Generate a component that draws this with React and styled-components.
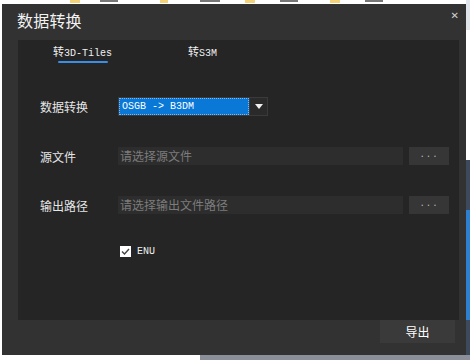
import styled, { createGlobalStyle } from 'styled-components';

const GlobalStyle = createGlobalStyle`
  html, body {
    margin: 0;
    padding: 0;
    background: #ffffff;
  }
  * {
    box-sizing: border-box;
  }
`;

const CJK = `"Noto Sans CJK SC", "Noto Sans", sans-serif`;
const MONO = `"Liberation Mono", "Noto Sans CJK SC", monospace`;

const Desktop = styled.div`
  position: relative;
  width: 470px;
  height: 360px;
  overflow: hidden;
  background: #ffffff;
`;

const Blob = styled.div`
  position: absolute;
  width: ${(p) => p.w}px;
  height: ${(p) => p.h}px;
  background: ${(p) => p.c};
`;

const Dialog = styled.div`
  position: absolute;
  left: 2px;
  top: 4px;
  width: 464px;
  height: 351px;
  background: #323232;
  display: flex;
  flex-direction: column;
  font-family: ${CJK};
`;

const Header = styled.div`
  height: 36px;
  display: flex;
  align-items: center;
  justify-content: space-between;
  padding: 0 7px 4px 15px;
`;

const Title = styled.div`
  font-size: 16px;
  color: #f2f2f2;
  letter-spacing: 0.2px;
`;

const Close = styled.div`
  font-family: "DejaVu Sans", sans-serif;
  font-size: 10px;
  color: #d0d0d0;
  align-self: flex-start;
  margin-top: 6px;
`;

const Panel = styled.div`
  height: 280px;
  margin: 0 7px 0 16px;
  background: #252525;
  display: flex;
  flex-direction: column;
`;

const Tabs = styled.div`
  display: flex;
  height: 24px;
  padding-left: 35px;
  padding-top: 4px;
`;

const Tab = styled.div`
  position: relative;
  width: ${(p) => p.w}px;
  font-family: ${MONO};
  font-size: 10px;
  line-height: 14px;
  color: #f0f0f0;
  white-space: nowrap;
  &::after {
    content: '';
    display: ${(p) => (p.active ? 'block' : 'none')};
    position: absolute;
    left: 5px;
    top: 17px;
    width: 50px;
    height: 2px;
    border-radius: 1px;
    background: #3a8ee6;
  }
`;

const Han = styled.span`
  font-family: ${CJK};
  font-size: 11px;
`;

const Form = styled.div`
  display: grid;
  grid-template-columns: 78px 1fr;
  row-gap: 31px;
  align-items: center;
  padding: 33px 10px 0 22px;
`;

const Label = styled.div`
  font-size: 12px;
  color: #e6e6e6;
`;

const SelectBox = styled.div`
  display: flex;
  width: 150px;
  height: 19px;
  padding: 1px;
  background: #3a3a3a;
`;

const SelectValue = styled.div`
  flex: 1;
  background: #0a78d7;
  color: #ffffff;
  font-family: ${MONO};
  font-size: 10px;
  line-height: 17px;
  padding-left: 3px;
  outline: 1px dotted #7fb8f0;
  outline-offset: -1px;
`;

const SelectArrow = styled.div`
  width: 17px;
  display: flex;
  align-items: center;
  justify-content: center;
  background: #2a2a2a;
  margin-left: 1px;
  &::before {
    content: '';
    border-left: 4px solid transparent;
    border-right: 4px solid transparent;
    border-top: 5px solid #f0f0f0;
  }
`;

const FileRow = styled.div`
  display: flex;
  gap: 6px;
  height: 18px;
`;

const Input = styled.div`
  flex: 1;
  background: #2d2d2d;
  color: #7c7c7c;
  font-size: 12px;
  line-height: 18px;
  padding-left: 2px;
`;

const Browse = styled.div`
  width: 40px;
  background: #363636;
  color: #bdbdbd;
  font-family: ${MONO};
  font-size: 9px;
  line-height: 16px;
  text-align: center;
  letter-spacing: 1px;
`;

const CheckRow = styled.div`
  display: flex;
  align-items: center;
  gap: 6px;
  padding: 32px 0 0 102px;
`;

const Check = styled.div`
  width: 11px;
  height: 11px;
  background: #ffffff;
  display: flex;
  align-items: center;
  justify-content: center;
`;

const CheckText = styled.div`
  font-family: ${MONO};
  font-size: 10px;
  color: #f0f0f0;
`;

const Footer = styled.div`
  display: flex;
  justify-content: flex-end;
  padding-right: 11px;
`;

const ExportButton = styled.div`
  width: 75px;
  height: 23px;
  background: #3a3a3a;
  color: #ffffff;
  font-size: 12px;
  line-height: 23px;
  text-align: center;
`;

export default function App() {
  return (
    <>
      <GlobalStyle />
      <Desktop>
        <Blob style={{ left: 70, top: 0 }} w={10} h={3} c="#f3d27a" />
        <Blob style={{ left: 100, top: 0 }} w={18} h={2} c="#777" />
        <Blob style={{ left: 160, top: 0 }} w={8} h={3} c="#f3d27a" />
        <Blob style={{ left: 200, top: 0 }} w={20} h={2} c="#777" />
        <Blob style={{ left: 245, top: 0 }} w={10} h={3} c="#f3d27a" />
        <Blob style={{ left: 280, top: 0 }} w={18} h={2} c="#777" />
        <Blob style={{ left: 330, top: 0 }} w={10} h={3} c="#f3d27a" />
        <Blob style={{ left: 365, top: 0 }} w={18} h={2} c="#777" />
        <Blob style={{ left: 466, top: 0 }} w={4} h={30} c="#dfe3ea" />
        <Blob style={{ left: 466, top: 160 }} w={4} h={200} c="#3d4a5c" />
        <Blob style={{ left: 466, top: 210 }} w={4} h={110} c="#2f7fd0" />
        <Blob style={{ left: 200, top: 355 }} w={270} h={5} c="#8a8f99" />
        <Dialog>
          <Header>
            <Title>数据转换</Title>
            <Close>✕</Close>
          </Header>
          <Panel>
            <Tabs>
              <Tab w={135} active>
                <Han>转</Han>3D-Tiles
              </Tab>
              <Tab w={60}>
                <Han>转</Han>S3M
              </Tab>
            </Tabs>
            <Form>
              <Label>数据转换</Label>
              <SelectBox>
                <SelectValue>OSGB -&gt; B3DM</SelectValue>
                <SelectArrow />
              </SelectBox>
              <Label>源文件</Label>
              <FileRow>
                <Input>请选择源文件</Input>
                <Browse>...</Browse>
              </FileRow>
              <Label>输出路径</Label>
              <FileRow>
                <Input>请选择输出文件路径</Input>
                <Browse>...</Browse>
              </FileRow>
            </Form>
            <CheckRow>
              <Check>
                <svg width="9" height="9" viewBox="0 0 9 9">
                  <path d="M1 4.5 L3.5 7 L8 2" fill="none" stroke="#444" strokeWidth="1.4" />
                </svg>
              </Check>
              <CheckText>ENU</CheckText>
            </CheckRow>
          </Panel>
          <Footer>
            <ExportButton>导出</ExportButton>
          </Footer>
        </Dialog>
      </Desktop>
    </>
  );
}
